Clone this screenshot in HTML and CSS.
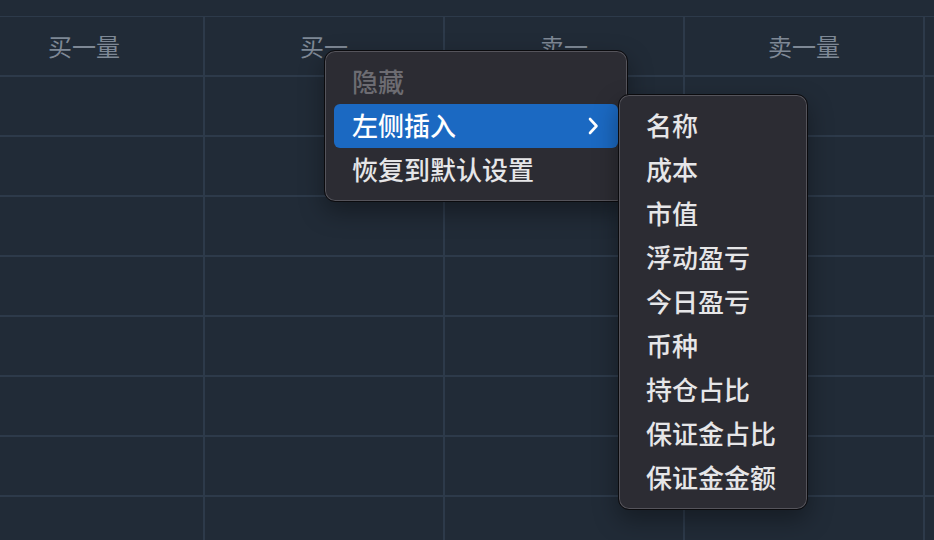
FILE: index.html
```html
<!DOCTYPE html>
<html lang="zh-CN">

<head>
    <meta charset="UTF-8">
    <meta name="viewport" content="width=device-width, initial-scale=1.0">
    <title>持仓</title>
    <link rel="stylesheet" href="styles.css">
</head>

<body>
    <div class="sheet">
        <div class="grid">
            <div class="cell head">买一量</div>
            <div class="cell head">买一</div>
            <div class="cell head">卖一</div>
            <div class="cell head">卖一量</div>
            <div class="cell head"></div>

            <div class="cell"></div><div class="cell"></div><div class="cell"></div><div class="cell"></div><div class="cell"></div>
            <div class="cell"></div><div class="cell"></div><div class="cell"></div><div class="cell"></div><div class="cell"></div>
            <div class="cell"></div><div class="cell"></div><div class="cell"></div><div class="cell"></div><div class="cell"></div>
            <div class="cell"></div><div class="cell"></div><div class="cell"></div><div class="cell"></div><div class="cell"></div>
            <div class="cell"></div><div class="cell"></div><div class="cell"></div><div class="cell"></div><div class="cell"></div>
            <div class="cell"></div><div class="cell"></div><div class="cell"></div><div class="cell"></div><div class="cell"></div>
            <div class="cell"></div><div class="cell"></div><div class="cell"></div><div class="cell"></div><div class="cell"></div>
            <div class="cell"></div><div class="cell"></div><div class="cell"></div><div class="cell"></div><div class="cell"></div>
        </div>
    </div>

    <!-- context menu over the header -->
    <ul class="menu main-menu">
        <li class="item disabled">隐藏</li>
        <li class="item active">
            <span>左侧插入</span>
            <svg class="chevron" width="12" height="20" viewBox="0 0 12 20">
                <path d="M3 3 L9.5 10 L3 17" fill="none" stroke="#ffffff" stroke-width="2.6" stroke-linecap="round" stroke-linejoin="round"/>
            </svg>
        </li>
        <li class="item">恢复到默认设置</li>
    </ul>

    <ul class="menu sub-menu">
        <li class="item">名称</li>
        <li class="item">成本</li>
        <li class="item">市值</li>
        <li class="item">浮动盈亏</li>
        <li class="item">今日盈亏</li>
        <li class="item">币种</li>
        <li class="item">持仓占比</li>
        <li class="item">保证金占比</li>
        <li class="item">保证金金额</li>
    </ul>
</body>

</html>
```

FILE: styles.css
```css
html, body {
    margin: 0;
    height: 100%;
    overflow: hidden;
}

body {
    background-color: #212b37;
    font-family: "Noto Sans CJK SC", "Noto Sans", sans-serif;
    position: relative;
}

.sheet {
    padding-top: 16px;
    overflow: hidden;
}

.grid {
    display: grid;
    grid-template-columns: repeat(5, 240px);
    margin-left: -35px;
    border-top: 1px solid #2d3a4a;
}

.cell {
    box-sizing: border-box;
    height: 60px;
    border-right: 2px solid #2d3a4a;
    border-bottom: 2px solid #2d3a4a;
}

.head {
    display: flex;
    align-items: center;
    justify-content: center;
    font-size: 24px;
    color: #7e8895;
    padding-bottom: 2px;
}

/* menus */
.menu {
    position: absolute;
    margin: 0;
    padding: 9px;
    list-style: none;
    background-color: #2c2c33;
    border: 1px solid #0b0b0e;
    border-radius: 11px;
    box-shadow: inset 0 0 0 1px #55545b, 0 10px 24px rgba(0, 0, 0, 0.35);
}

.main-menu {
    left: 324px;
    top: 50px;
    width: 284px;
}

.sub-menu {
    left: 618px;
    top: 94px;
    width: 170px;
}

.item {
    box-sizing: border-box;
    height: 44px;
    display: flex;
    align-items: center;
    justify-content: space-between;
    padding: 0 18px 3px;
    font-size: 26px;
    font-weight: 500;
    color: #e6e6e8;
    border-radius: 6px;
    white-space: nowrap;
}

.item.disabled {
    color: #6d6c72;
}

.item.active {
    background-color: #1b69c2;
    color: #ffffff;
    padding-right: 19px;
}

.chevron {
    display: block;
    margin-top: 3px;
}
```
